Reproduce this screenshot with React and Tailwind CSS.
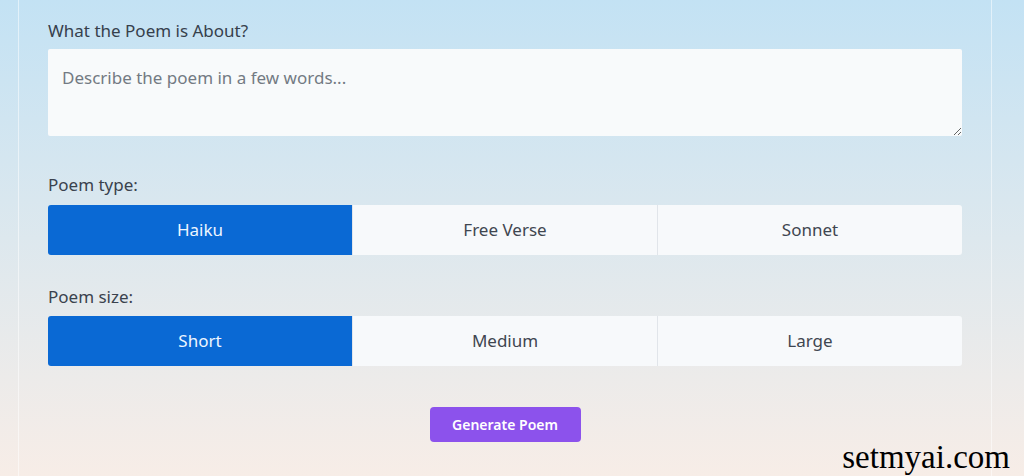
import React, { useState } from 'react';

const font = { fontFamily: '"Noto Sans", "Open Sans", sans-serif' };

function Segmented({ options, value, onChange }) {
  return (
    <div className="flex h-[50px] w-full rounded-[3px] overflow-hidden">
      {options.map((opt, i) => (
        <button
          key={opt}
          type="button"
          onClick={() => onChange(opt)}
          className={
            'flex-1 flex items-center justify-center text-[17px] ' +
            (value === opt
              ? 'bg-[#0a69d4] text-[#eef6ff]'
              : 'bg-[#f7f9fb] text-[#3f4650]') +
            (i > 0 ? ' border-l border-[#e1e5ea]' : '')
          }
        >
          {opt}
        </button>
      ))}
    </div>
  );
}

export default function App() {
  const [type, setType] = useState('Haiku');
  const [size, setSize] = useState('Short');

  return (
    <div
      className="relative w-[1024px] h-[476px] overflow-hidden bg-gradient-to-b from-[#c3e2f4] via-[#dde8ee] to-[#f7ede7]"
      style={font}
    >
      <div className="ml-[18px] mr-[32px] h-full border-x border-white/50 px-[29px] pt-[19px]">
        <label className="block text-[17px] text-[#36404c] leading-[24px]">
          What the Poem is About?
        </label>
        <textarea
          className="mt-[6px] block w-full h-[87px] bg-[#f8fafb] rounded-[2px] px-[14px] py-[16px] text-[17px] text-[#3f4650] placeholder:text-[#737a83] outline-none"
          placeholder="Describe the poem in a few words..."
        ></textarea>

        <div className="mt-[37px] text-[17px] text-[#3a424d] leading-[24px]">Poem type:</div>
        <div className="mt-[8px]">
          <Segmented options={['Haiku', 'Free Verse', 'Sonnet']} value={type} onChange={setType} />
        </div>

        <div className="mt-[30px] text-[17px] text-[#3a424d] leading-[24px]">Poem size:</div>
        <div className="mt-[7px]">
          <Segmented options={['Short', 'Medium', 'Large']} value={size} onChange={setSize} />
        </div>

        <div className="mt-[41px] flex justify-center">
          <button
            type="button"
            className="w-[151px] h-[35px] rounded-[4px] bg-[#8c52ec] text-white text-[14px] font-semibold"
          >
            Generate Poem
          </button>
        </div>
      </div>

      <div
        className="absolute right-[14px] bottom-[1px] text-[33px] leading-[36px] text-black"
        style={{ fontFamily: '"Liberation Serif", serif' }}
      >
        setmyai.com
      </div>
    </div>
  );
}
